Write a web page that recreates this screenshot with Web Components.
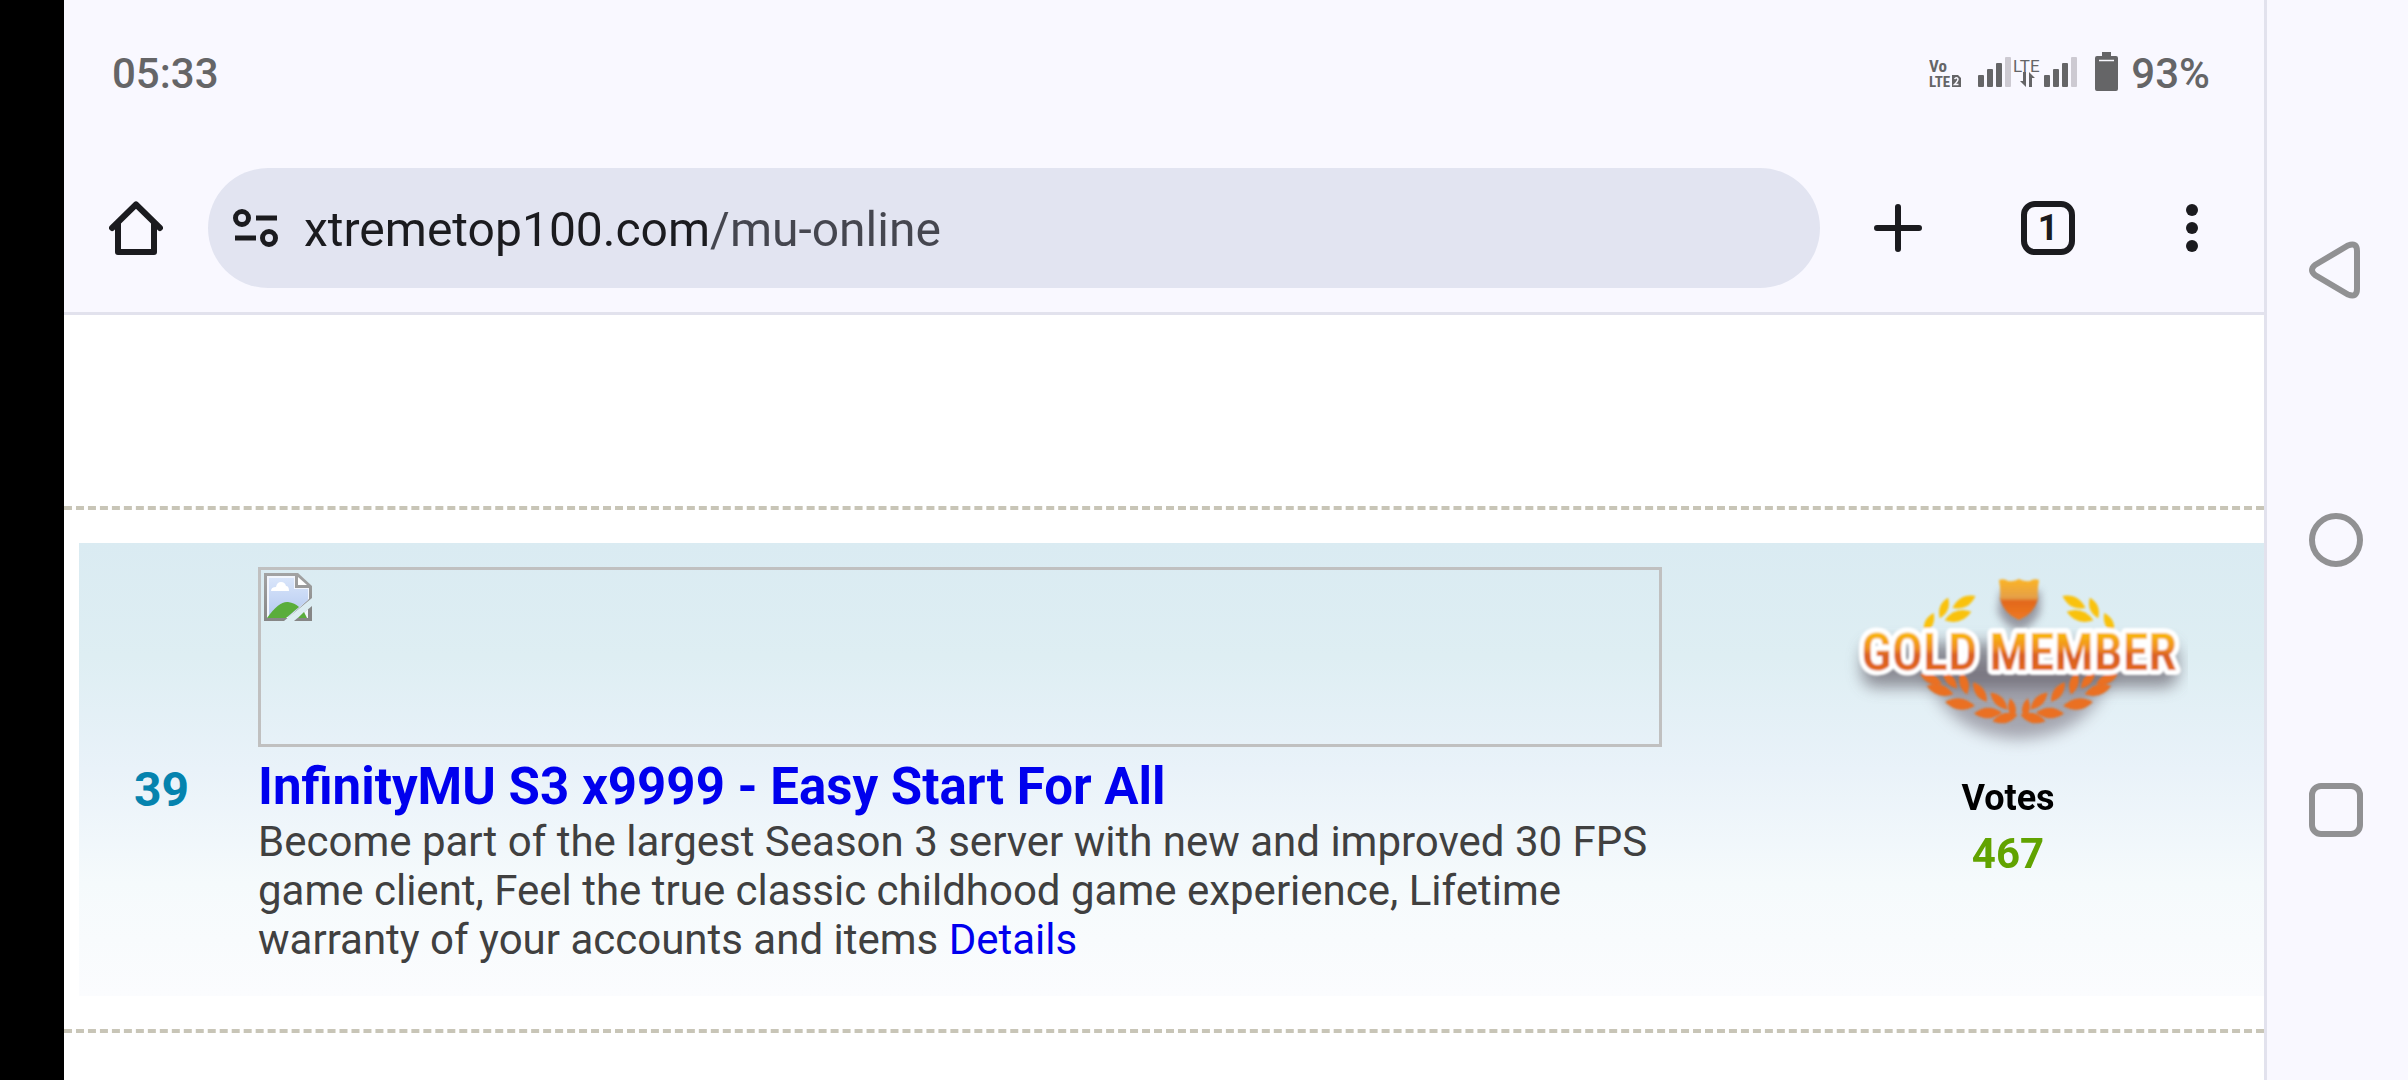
<!DOCTYPE html>
<html lang="en">
<head>
<meta charset="utf-8">
<meta name="viewport" content="width=device-width, initial-scale=1">
<title>xtremetop100.com/mu-online</title>
<style>
  html, body { margin: 0; height: 100%; }
  body { font-family: Roboto, sans-serif; background: #000; }
</style>
</head>
<body>

<phone-screen>
  <status-bar slot="status" time="05:33" battery="93%"></status-bar>
  <browser-toolbar slot="toolbar" url="xtremetop100.com/mu-online" tabs="1"></browser-toolbar>
  <server-list>
    <server-entry rank="39" votes="467">
      <a slot="title" href="#infinitymu">InfinityMU S3 x9999 - Easy Start For All</a>
      Become part of the largest Season 3 server with new and improved 30 FPS game client, Feel the true classic childhood game experience, Lifetime warranty of your accounts and items
      <a href="#details">Details</a>
      <gold-badge slot="badge"></gold-badge>
    </server-entry>
  </server-list>
  <system-nav slot="nav"></system-nav>
</phone-screen>

<script>
'use strict';

/* Screen frame: camera cut-out strip, browser window, system buttons */
class PhoneScreen extends HTMLElement {
  connectedCallback() {
    this.attachShadow({ mode: 'open' }).innerHTML = `
      <style>
        :host {
          display: grid; grid-template-columns: 64px minmax(0, 1fr) 144px;
          min-height: 100vh; background: #000;
        }
        main {
          grid-column: 2; background: #fff;
          display: flex; flex-direction: column;
        }
      </style>
      <main>
        <slot name="status"></slot>
        <slot name="toolbar"></slot>
        <slot></slot>
      </main>
      <slot name="nav"></slot>
    `;
  }
}

class StatusBar extends HTMLElement {
  connectedCallback() {
    this.attachShadow({ mode: 'open' }).innerHTML = `
      <style>
        :host {
          display: flex; align-items: center; justify-content: space-between;
          height: 144px; box-sizing: border-box; padding: 0 54px 0 48px;
          background: #f9f8ff; color: #656567;
          font-size: 42px; line-height: 50px;
        }
        .text { padding-top: 4px; font-weight: 500; }
        .right { display: flex; align-items: center; gap: 12px; }
        svg { display: block; }
      </style>
      <span class="text">${this.getAttribute('time')}</span>
      <span class="right">
        <svg width="190" height="40" viewBox="0 0 190 40" fill="#656567">
          <g font-family="'Roboto Condensed', 'Liberation Sans', sans-serif" font-weight="700">
            <text x="0" y="20" font-size="17">Vo</text>
            <text x="0" y="35" font-size="15">LTE</text>
          </g>
          <path d="M23 23h6l3 3v9h-9z"/>
          <path d="M25.500 27q2.500-2.500 3.500 0q0 2-3.500 5.500h4" fill="none" stroke="#f9f8ff" stroke-width="1.500"/>
          <g id="bars">
            <rect x="49" y="23" width="6" height="12" rx="1"/>
            <rect x="58" y="17" width="6" height="18" rx="1"/>
            <rect x="67" y="11" width="6" height="24" rx="1"/>
            <rect x="76" y="5" width="6" height="30" rx="1" fill="#cdcad2"/>
          </g>
          <text x="84" y="20" font-size="17">LTE</text>
          <path d="M94 20h3v15l-6-6h3zM100 35v-15l6 6h-3v9z"/>
          <use href="#bars" x="66"/>
          <path d="M173 0h9v4h5q2 0 2 2v31q0 2-2 2h-19q-2 0-2-2V6q0-2 2-2h5z"/>
          <path d="M170 8.500h15" stroke="#f9f8ff" stroke-width="1.500"/>
        </svg>
        <span class="text">${this.getAttribute('battery')}</span>
      </span>
    `;
  }
}

class BrowserToolbar extends HTMLElement {
  connectedCallback() {
    this.attachShadow({ mode: 'open' }).innerHTML = `
      <style>
        :host {
          display: flex; align-items: center;
          height: 168px; background: #f9f8ff; color: #1b1b1f;
          border-bottom: 3px solid #e2e2ed;
        }
        button {
          flex: none; width: 144px; height: 144px; padding: 0; border: 0;
          display: grid; place-items: center;
          background: none; color: inherit; font: inherit; cursor: pointer;
        }
        svg { display: block; fill: none; stroke: currentColor; }
        .omnibox {
          flex: 1; min-width: 0; height: 120px; border-radius: 60px;
          display: flex; align-items: center;
          background: #e2e4f1;
        }
        .omnibox button { width: 96px; height: 96px; }
        input {
          flex: 1; min-width: 0; height: 72px; padding: 2px 0 0; border: 0; outline: 0;
          font: 48px Roboto, sans-serif; color: #1b1b1f;
          /* host name dark, path lighter */
          background: linear-gradient(90deg, #1b1b1f 404px, #45464f 404px);
          -webkit-background-clip: text; background-clip: text;
          -webkit-text-fill-color: transparent;
        }
        .new { margin-inline: 6px; }
        .count {
          width: 54px; height: 54px; box-sizing: border-box;
          border: 6px solid currentColor; border-radius: 14px;
          font-size: 36px; line-height: 42px; font-weight: 700; text-align: center;
        }
      </style>
      <button type="button" aria-label="Home">
        <svg width="54" height="54" viewBox="0 0 54 54" stroke-width="6" stroke-linecap="round" stroke-linejoin="round">
          <path d="M3 27L27 3.500L51 27M9 22V51H45V22"/>
        </svg>
      </button>
      <div class="omnibox">
        <button type="button" aria-label="Site information">
          <svg width="46" height="38" viewBox="0 0 46 38" stroke-width="5">
            <circle cx="9" cy="9" r="6.500"/><path d="M23 9h21M2 29h21"/><circle cx="36" cy="29" r="6.500"/>
          </svg>
        </button>
        <input type="text" aria-label="Address" spellcheck="false" value="${this.getAttribute('url')}">
      </div>
      <button type="button" class="new" aria-label="New tab">
        <svg width="48" height="48" viewBox="0 0 48 48" stroke-width="6" stroke-linecap="round">
          <path d="M24 3v42M3 24h42"/>
        </svg>
      </button>
      <button type="button" aria-label="Switch tabs"><span class="count">${this.getAttribute('tabs')}</span></button>
      <button type="button" aria-label="More options">
        <svg width="12" height="48" viewBox="0 0 12 48" style="fill: currentColor; stroke: none">
          <circle cx="6" cy="6" r="6"/><circle cx="6" cy="24" r="6"/><circle cx="6" cy="42" r="6"/>
        </svg>
      </button>
    `;
  }
}

class SystemNav extends HTMLElement {
  connectedCallback() {
    this.attachShadow({ mode: 'open' }).innerHTML = `
      <style>
        :host {
          grid-column: 3; box-sizing: border-box; padding: 12.5vh 3px 12.5vh 0;
          display: flex; flex-direction: column;
          background: #f9f8ff; border-left: 3px solid #e2e2ed;
        }
        button {
          flex: 1; padding: 0; border: 0; background: none; cursor: pointer;
          display: grid; place-items: center;
        }
        svg { display: block; fill: none; stroke: #919193; stroke-width: 6px; }
      </style>
      <button type="button" aria-label="Back">
        <svg width="54" height="58" viewBox="0 0 54 58">
          <path d="M6 24L39 4.500Q48 1 48 10V48Q48 57 39 53.500L6 34Q0 29 6 24Z"/>
        </svg>
      </button>
      <button type="button" aria-label="Home">
        <svg width="54" height="54" viewBox="0 0 54 54"><circle cx="27" cy="27" r="24"/></svg>
      </button>
      <button type="button" aria-label="Recent apps">
        <svg width="54" height="54" viewBox="0 0 54 54"><rect x="3" y="3" width="48" height="48" rx="9"/></svg>
      </button>
    `;
  }
}

class ServerList extends HTMLElement {
  connectedCallback() {
    this.attachShadow({ mode: 'open' }).innerHTML = `
      <style>
        :host { display: block; padding-top: 191px; }
        section { border-bottom: 4px dashed #c8c5b7; }
      </style>
      <section><slot></slot></section>
    `;
  }
}

class ServerEntry extends HTMLElement {
  connectedCallback() {
    this.attachShadow({ mode: 'open' }).innerHTML = `
      <style>
        :host {
          display: block; padding: 33px 0 33px 15px;
          border-top: 4px dashed #c8c5b7;
        }
        article {
          display: grid; grid-template-columns: 179px minmax(0, 1fr) 602px;
          padding: 24px 0 32px;
          background: linear-gradient(#daebf2, #deeef3 25%, #e9f2f9 50%, #f5fafc 75%, #fbfcfe);
        }
        .rank {
          align-self: center; padding: 48px 14px 0 0; text-align: center;
          font-size: 48px; line-height: 56px; font-weight: 700; color: #0583ae;
        }
        .banner {
          display: block; height: 180px; box-sizing: border-box;
          padding: 3px; border: 3px solid #c0c0c0;
        }
        .banner svg { display: block; }
        h2 { margin: 10px 0 0; font-size: 51px; line-height: 60px; font-weight: 700; }
        p { margin: 0; font-size: 42px; line-height: 49px; color: #404040; }
        ::slotted(a) { color: #0000ee; text-decoration: none; }
        .votes { padding-left: 90px; text-align: center; }
        .label { margin-top: 20px; font-size: 36px; line-height: 42px; font-weight: 700; color: #000; }
        .total { margin-top: 10px; font-size: 42px; line-height: 49px; font-weight: 700; color: #61a300; }
      </style>
      <article>
        <div class="rank">${this.getAttribute('rank')}</div>
        <div>
          <a class="banner" href="#banner" aria-label="Banner">
            <svg width="48" height="48" viewBox="0 0 48 48">
              <defs>
                <linearGradient id="sky" x2="0" y2="1"><stop stop-color="#d9e5fa"/><stop offset="1" stop-color="#b5caf0"/></linearGradient>
                <linearGradient id="edge" x2="0" y2="1"><stop stop-color="#a3a3a3"/><stop offset="1" stop-color="#868686"/></linearGradient>
              </defs>
              <path d="M0 0H34L48 13V25L20 48H0Z" fill="url(#edge)"/>
              <path d="M3 3H31V15H45V26L24 45H3Z" fill="#f3f6fd"/>
              <path d="M5 5H30V16H44V27L24 44H5Z" fill="url(#sky)"/>
              <path d="M34 4V12H43Z" fill="#fff"/>
              <path d="M7 18q0-4 5-4q1-5 5-5q4 0 5 4q3 0 3 5z" fill="#fff"/>
              <path d="M3 45Q15 28 24 29Q31 30 35 34L22 45Z" fill="#5aad3b"/>
              <path d="M30 48L48 33V48Z" fill="#868686"/>
              <path d="M34 45L44 36V45Z" fill="#f3f6fd"/>
              <path d="M34 45L40 39L43 45Z" fill="#5aad3b"/>
            </svg>
          </a>
          <h2><slot name="title"></slot></h2>
          <p><slot></slot></p>
        </div>
        <div class="votes">
          <slot name="badge"></slot>
          <div class="label">Votes</div>
          <div class="total">${this.getAttribute('votes')}</div>
        </div>
      </article>
    `;
  }
}

/* Laurel leaves of the left half: x, y, angle, half length */
const TOP_LEAVES = [[116, 41, -68, 11], [136, 35, -28, 13], [130, 49, -18, 14], [101, 56, -65, 11]];
const LOW_LEAVES = [
  [103, 112, 25, 12], [112, 123, 18, 14], [136, 116, 75, 12], [122, 113, 50, 11],
  [132, 137, 8, 15], [152, 125, 55, 12], [160, 146, -2, 14],
  [171, 134, 45, 12], [177, 151, -15, 13], [184, 141, 80, 10],
];

class GoldBadge extends HTMLElement {
  connectedCallback() {
    const label = 'x="191" y="103" text-anchor="middle" font-size="52"';
    this.attachShadow({ mode: 'open' }).innerHTML = `
      <style>
        :host { display: block; height: 190px; }
        svg { display: block; margin: 0 auto; }
        text { font-family: 'Roboto Condensed', 'Liberation Sans', sans-serif; font-weight: 600; }
      </style>
      <svg width="360" height="190" viewBox="0 0 360 190">
        <defs>
          <linearGradient id="gold" gradientUnits="userSpaceOnUse" x1="0" y1="62" x2="0" y2="106">
            <stop stop-color="#fcc400"/><stop offset=".45" stop-color="#ef8d25"/>
            <stop offset=".6" stop-color="#d95f20"/><stop offset="1" stop-color="#e4691f"/>
          </linearGradient>
          <linearGradient id="shield" x2="0" y2="1">
            <stop stop-color="#fcb424"/><stop offset=".45" stop-color="#e5a048"/>
            <stop offset=".55" stop-color="#e2681c"/><stop offset="1" stop-color="#ee7a22"/>
          </linearGradient>
          <filter id="soft" x="-20%" y="-50%" width="140%" height="200%"><feGaussianBlur stdDeviation="8"/></filter>
          <filter id="near" x="-20%" y="-50%" width="140%" height="200%"><feGaussianBlur stdDeviation="4"/></filter>
          <filter id="smooth"><feGaussianBlur stdDeviation="1"/></filter>
        </defs>
        <path d="M98 100Q115 168 191 172Q267 168 284 100Z" fill="#6f6874" opacity=".55" filter="url(#soft)"/>
        <path d="M173 24H212V45Q203 62 191 63Q179 62 170 45Z" fill="#67606d" opacity=".6" filter="url(#near)"/>
        <rect x="34" y="76" width="316" height="44" rx="14" fill="#5f5863" opacity=".65" filter="url(#soft)"/>
        <g filter="url(#smooth)">
          <g fill="#f9c20e">${this._leaves(TOP_LEAVES)}</g>
          <g fill="#ea6f20">${this._leaves(LOW_LEAVES)}</g>
          <path d="M171 13Q176 11 180 14Q185 15 191 12Q197 15 202 14Q206 11 211 13Q209 24 210 32Q206 47 191 53Q176 47 172 32Q173 24 171 13Z" fill="url(#shield)"/>
          <text ${label} fill="#fff" stroke="#fff" stroke-width="10" stroke-linejoin="round" aria-hidden="true">GOLD MEMBER</text>
          <text ${label} fill="url(#gold)">GOLD MEMBER</text>
        </g>
      </svg>
    `;
  }

  _leaves(list) {
    const half = list.map(([x, y, angle, s]) =>
      `<path transform="translate(${x} ${y}) rotate(${angle})" d="M${-s} 0Q0 ${-s * 0.75} ${s} 0Q0 ${s * 0.75} ${-s} 0Z"/>`
    ).join('');
    return `<g>${half}</g><g transform="translate(382 0) scale(-1 1)">${half}</g>`;
  }
}

customElements.define('phone-screen', PhoneScreen);
customElements.define('status-bar', StatusBar);
customElements.define('browser-toolbar', BrowserToolbar);
customElements.define('system-nav', SystemNav);
customElements.define('server-list', ServerList);
customElements.define('server-entry', ServerEntry);
customElements.define('gold-badge', GoldBadge);
</script>
</body>
</html>
